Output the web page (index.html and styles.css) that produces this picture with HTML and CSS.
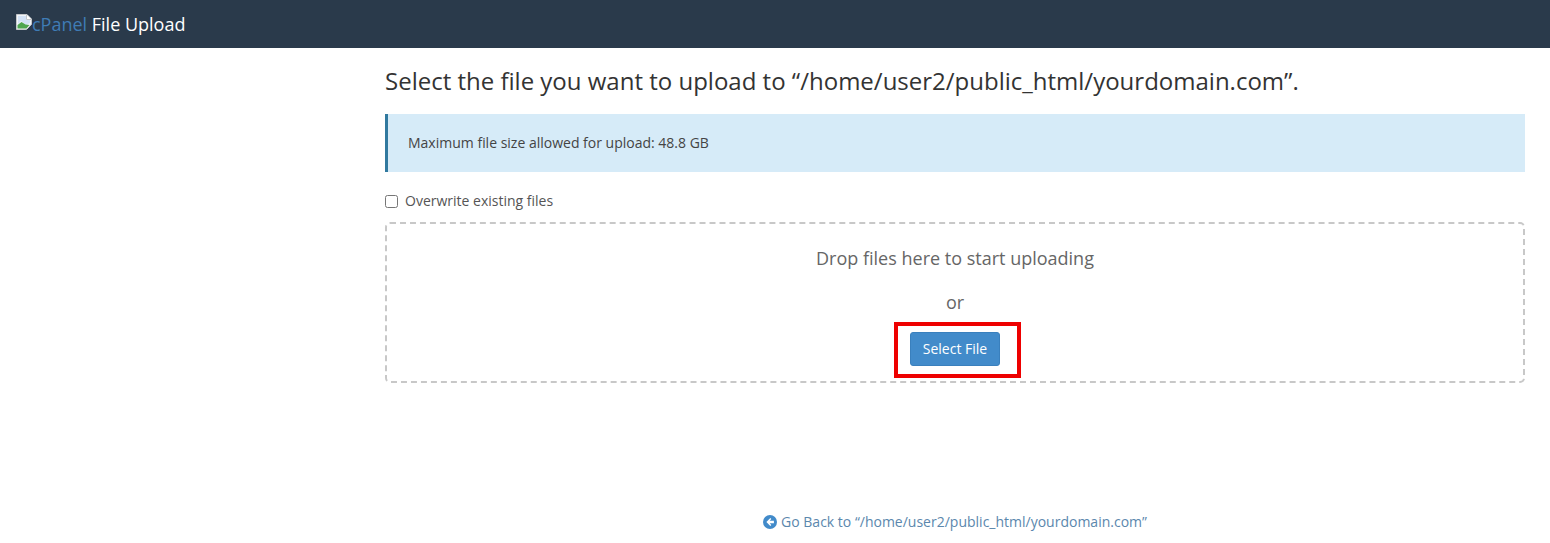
FILE: index.html
```html
<!DOCTYPE html>
<html lang="en">
<head>
<meta charset="utf-8">
<title>cPanel File Upload</title>
<link rel="stylesheet" href="styles.css">
</head>
<body>
<header class="topbar">
  <svg class="broken" width="16" height="16" viewBox="0 0 16 16" aria-hidden="true">
    <path d="M0.500 0.500H11L15.500 5V15.500H0.500Z" fill="#f2f5f9" stroke="#c4c7ca"/>
    <path d="M10.500 .5V5.500H15.500" fill="#fff" stroke="#c4c7ca"/>
    <path d="M2 2H10V6H14V9L10 11 5 7 2 10Z" fill="#d3e2f6"/>
    <path d="M1.500 14.500V11L5.500 8l4 2.500 4 .5-3 3.500Z" fill="#4fa650"/>
    <path d="M10 16L16 10V16Z" fill="#2a3a4b"/>
    <path d="M10.500 15.500L15.500 10" stroke="#d8d8d8" fill="none"/>
  </svg>
  <span class="brand">cPanel</span>
  <span class="title">File Upload</span>
</header>
<main class="content">
  <h1 class="heading">Select the file you want to upload to “/home/user2/public_html/yourdomain.com”.</h1>
  <div class="notice">Maximum file size allowed for upload: 48.8 GB</div>
  <label class="overwrite"><input class="check" type="checkbox"><span>Overwrite existing files</span></label>
  <section class="dropzone">
    <p class="drop-text">Drop files here to start uploading</p>
    <p class="drop-or">or</p>
    <div class="btn-wrap">
      <button class="select-btn" type="button">Select File</button>
      <div class="highlight"></div>
    </div>
  </section>
</main>
<footer class="back">
  <a class="back-link" href="#">
    <svg class="back-icon" width="14" height="14" viewBox="0 0 14 14" aria-hidden="true">
      <circle cx="7" cy="7" r="7" fill="#428bca"/>
      <path d="M7.300 3.100L3.400 7l3.900 3.900 1-1L6.700 8.200H10.900V5.800H6.700L8.300 4.100Z" fill="#fff"/>
    </svg>
    <span>Go Back to “/home/user2/public_html/yourdomain.com”</span>
  </a>
</footer>
</body>
</html>
```
FILE: styles.css
```css
* { box-sizing: border-box; }
html, body { margin: 0; padding: 0; }
body {
  height: 543px;
  overflow: hidden;
  background: #fff;
  color: #333;
  font-family: "Open Sans", sans-serif;
  font-size: 14px;
}
.topbar {
  height: 48px;
  background: #2a3a4b;
  display: flex;
  align-items: center;
  padding: 0 16px;
  font-size: 18px;
}
.broken { flex: none; margin-top: -4px; }
.brand { color: #3f7cb5; margin-right: 4.6px; }
.title { color: #fff; }
.content {
  margin-left: 385px;
  margin-right: 25px;
  padding-top: 18px;
}
.heading {
  margin: 0;
  font-size: 24px;
  font-weight: 400;
  line-height: 30px;
  color: #333;
}
.notice {
  margin-top: 18px;
  height: 58px;
  display: flex;
  align-items: center;
  padding: 0 0 1px 20px;
  background: #d6ebf8;
  border-left: 3px solid #31799f;
  color: #444;
}
.overwrite {
  margin-top: 18px;
  display: flex;
  align-items: center;
  height: 20px;
  color: #555;
}
.check { width: 13px; height: 13px; margin: 2px 7px 0 0; }
.dropzone {
  margin-top: 12px;
  height: 161px;
  border: 2px dashed #c8c8c8;
  border-radius: 5px;
  display: flex;
  flex-direction: column;
  align-items: center;
  color: #666;
  font-size: 18px;
}
.drop-text { margin: 21px 0 0; line-height: 26px; }
.drop-or { margin: 18px 0 0; line-height: 26px; }
.btn-wrap {
  position: relative;
  margin-top: 17px;
  line-height: 0;
}
.highlight {
  position: absolute;
  left: -16px;
  top: -10px;
  width: 127px;
  height: 56px;
  border: 4px solid #ee0000;
}
.select-btn {
  width: 90px;
  height: 34px;
  background: #428bca;
  border: 1px solid #3a80bd;
  border-radius: 3px;
  color: #fff;
  font: 14px "Open Sans", sans-serif;
  padding: 0 0 2px;
}
.back {
  margin-top: 129px;
  text-align: center;
  padding-left: 360px;
}
.back-link {
  display: inline-flex;
  align-items: center;
  gap: 4px;
  color: #5b87ad;
  text-decoration: none;
  line-height: 20px;
}
.back-icon { flex: none; }
```
